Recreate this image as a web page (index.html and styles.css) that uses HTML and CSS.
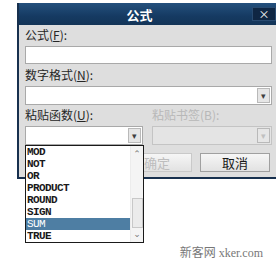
FILE: index.html
```html
<!DOCTYPE html>
<html lang="zh">
  <head>
    <meta charset="UTF-8" />
    <title>公式</title>
    <link rel="stylesheet" href="styles.css">
  </head>
  <body>
    <div class="dialog">
      <div class="titlebar">
        <span class="title">公式</span>
        <span class="close">×</span>
      </div>
      <div class="body">
        <div class="label">公式(<u>F</u>):</div>
        <div class="input"></div>

        <div class="label label-2">数字格式(<u>N</u>):</div>
        <div class="select"><span class="arrow">▾</span></div>

        <div class="pair">
          <div class="col">
            <div class="label">粘贴函数(<u>U</u>):</div>
            <div class="select short"><span class="arrow">▾</span></div>
            <div class="list">
              <ul class="items">
                <li>MOD</li>
                <li>NOT</li>
                <li>OR</li>
                <li>PRODUCT</li>
                <li>ROUND</li>
                <li>SIGN</li>
                <li class="picked">SUM</li>
                <li>TRUE</li>
              </ul>
              <div class="scroll">
                <span class="up">⌃</span>
                <span class="thumb"></span>
                <span class="down">⌄</span>
              </div>
            </div>
          </div>
          <div class="col">
            <div class="label off">粘贴书签(B):</div>
            <div class="select short off"><span class="arrow">▾</span></div>
          </div>
        </div>

        <div class="buttons">
          <button class="off">确定</button>
          <button>取消</button>
        </div>
      </div>
    </div>
    <div class="mark">新客网 xker.com</div>
  </body>
</html>
```

FILE: styles.css
```css
body {
  margin: 0;
  background: #ffffff;
  overflow: hidden;
  font-family: "Noto Sans CJK SC", sans-serif;
  font-size: 12px;
}
.dialog {
  margin: 3px 0 0 17px;
  width: 261px;
  border: 2px solid #17304e;
  border-top: 0;
  background: #dedede;
}
.titlebar {
  height: 22px;
  display: flex;
  align-items: center;
  background: linear-gradient(#24507d, #153a62 60%, #133457);
}
.title {
  flex: 1;
  text-align: center;
  padding-left: 8px;
  color: #ffffff;
  font-weight: bold;
  font-size: 13px;
}
.close {
  width: 22px;
  height: 12px;
  margin-right: 4px;
  background: #0f2643;
  border: 1px solid #284a70;
  color: #ffffff;
  font-size: 11px;
  line-height: 12px;
  text-align: center;
}
.body {
  padding: 3px 6px 5px 6px;
}
.label {
  height: 14px;
  line-height: 14px;
  color: #262626;
  margin-bottom: 4px;
}
.label-2 {
  margin-top: 4px;
}
.off {
  color: #b8b8b8;
}
.input {
  width: 245px;
  height: 16px;
  background: #ffffff;
  border: 1px solid #a9a9a9;
}
.select {
  position: relative;
  width: 245px;
  height: 17px;
  background: #ffffff;
  border: 1px solid #a9a9a9;
}
.select.short {
  width: 116px;
}
.select.off {
  width: 118px;
  background: #e4e4e4;
  border-color: #c4c4c4;
}
.arrow {
  position: absolute;
  right: 1px;
  top: 1px;
  width: 13px;
  height: 15px;
  background: #e6e6e6;
  border: 1px solid #b9b9b9;
  box-sizing: border-box;
  color: #404040;
  font-size: 9px;
  line-height: 13px;
  text-align: center;
}
.select.off .arrow {
  color: #c0c0c0;
}
.pair {
  display: flex;
  gap: 9px;
  margin-top: 3px;
}
.col {
  position: relative;
}
.list {
  position: absolute;
  left: 0;
  top: 37px;
  width: 117px;
  display: flex;
  background: #ffffff;
  border: 1px solid #1a1a1a;
  z-index: 2;
}
.items {
  flex: 1;
  margin: 0;
  padding: 0;
  list-style: none;
  font-family: "Liberation Mono", monospace;
  font-weight: bold;
  font-size: 11px;
  letter-spacing: -0.6px;
  color: #1a1a1a;
}
.items li {
  height: 12px;
  line-height: 12px;
  padding-left: 1px;
  overflow: hidden;
}
.items li.picked {
  background: #4e7ea3;
  color: #ffffff;
  font-weight: normal;
}
.scroll {
  position: relative;
  width: 12px;
  background: #f4f4f4;
  border-left: 1px solid #ececec;
}
.up, .down {
  position: absolute;
  left: 0;
  width: 12px;
  height: 10px;
  line-height: 10px;
  text-align: center;
  color: #777777;
  font-family: "DejaVu Sans", sans-serif;
  font-size: 9px;
}
.up {
  top: 3px;
}
.down {
  bottom: 3px;
}
.thumb {
  position: absolute;
  left: 1px;
  top: 52px;
  width: 9px;
  height: 28px;
  background: #ebebeb;
  border: 1px solid #c8c8c8;
}
.buttons {
  display: flex;
  justify-content: flex-end;
  gap: 8px;
  margin-top: 8px;
  padding-right: 4px;
}
button {
  width: 70px;
  height: 19px;
  padding: 0;
  background: linear-gradient(#f6f6f6, #e2e2e2);
  border: 1px solid #a0a0a0;
  font-family: "Noto Sans CJK SC", sans-serif;
  font-size: 13px;
  line-height: 17px;
  color: #1a1a1a;
}
button.off {
  color: #bdbdbd;
  border-color: #c9c9c9;
}
.mark {
  margin: 67px 13px 0 0;
  height: 14px;
  line-height: 14px;
  text-align: right;
  font-family: "Liberation Serif", "Noto Sans CJK SC", serif;
  font-size: 12px;
  color: #777777;
}
```
